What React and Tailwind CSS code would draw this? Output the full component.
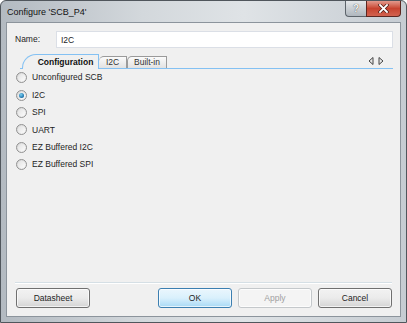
import React, { useState } from 'react';

const font = { fontFamily: '"Liberation Sans", Arial, sans-serif' };

// ── Radio option ─────────────────────────────────────────────
function Radio({ label, checked, onSelect }) {
  return (
    <button onClick={onSelect} className="flex items-center h-[17.4px] pl-[9px] text-left">
      <span className="w-[11px] h-[11px] rounded-full border border-[#929292] bg-gradient-to-br from-[#d4d4d4] to-[#f8f8f8] flex items-center justify-center shrink-0">
        <span className="w-[7px] h-[7px] rounded-full bg-gradient-to-br from-[#e2e2e2] to-[#fbfbfb] flex items-center justify-center">
          {checked && (
            <span className="w-[5px] h-[5px] rounded-full bg-[radial-gradient(circle_at_40%_35%,#7ed3f5,#1a6fa8_70%,#114a78)]" />
          )}
        </span>
      </span>
      <span className="ml-[5px] text-[8.5px] text-[#1e1e1e] leading-none">{label}</span>
    </button>
  );
}

// ── Push button ──────────────────────────────────────────────
function Btn({ children, variant = 'normal', className = '' }) {
  const styles = {
    normal: 'border-[#707070] bg-gradient-to-b from-[#f2f2f2] via-[#ebebeb] to-[#d4d4d4] text-[#1e1e1e]',
    primary: 'border-[#3c7fb1] bg-gradient-to-b from-[#eaf6fd] via-[#d9f0fc] to-[#a7d9f5] text-[#1e1e1e]',
    disabled: 'border-[#c4c8cb] bg-[#f4f4f4] text-[#a0a0a0]',
  };
  return (
    <button className={`h-[20px] w-[74px] rounded-[3px] border text-[8.5px] shadow-[inset_0_0_0_1px_rgba(255,255,255,0.7)] ${styles[variant]} ${className}`}>
      {children}
    </button>
  );
}

export default function App() {
  const options = ['Unconfigured SCB', 'I2C', 'SPI', 'UART', 'EZ Buffered I2C', 'EZ Buffered SPI'];
  const [selected, setSelected] = useState('I2C');
  const [name, setName] = useState('I2C');
  const [tab, setTab] = useState('Configuration');

  const tabCls = (t, base) =>
    `${base} border border-b-0 text-[8.5px] leading-none ${
      tab === t
        ? 'border-[#84c1f3] bg-[#f0f0f0] font-bold text-[#111] h-[15px] -mb-[1px]'
        : 'border-[#9a9a9a] bg-gradient-to-b from-[#fbfbfb] to-[#e2e2e2] text-[#333] h-[12px]'
    }`;

  return (
    <div style={font} className="w-[407px] h-[323px] flex flex-col border border-[#50565c] rounded-t-[6px] px-[5px] pb-[5px] bg-[linear-gradient(90deg,#b3bac1_0%,#d3d8dc_35%,#dfe3e6_60%,#c6ccd2_100%)]">
      {/* ── Title bar ── */}
      <div className="h-[21px] shrink-0 flex items-start">
        <span className="ml-[1px] mt-[5px] text-[9px] text-[#111]">Configure 'SCB_P4'</span>
        <div className="ml-auto flex">
          <button className="w-[21px] h-[16px] rounded-bl-[4px] border border-t-0 border-r-0 border-[#5d646b] bg-gradient-to-b from-[#e4e7ea] via-[#c9ced3] to-[#b0b7be] text-[10px] font-bold text-[#f4f4f4] leading-none [text-shadow:0_0_1px_#222]">
            ?
          </button>
          <button className="w-[35px] h-[16px] rounded-br-[4px] border border-t-0 border-[#5d2620] bg-gradient-to-b from-[#e2998d] via-[#c7432f] to-[#d2624f] flex items-center justify-center">
            <svg width="11" height="9" viewBox="0 0 11 9">
              <path d="M2 1 L9 8 M9 1 L2 8" stroke="#4a1a14" strokeWidth="3.2" strokeLinecap="square" />
              <path d="M2 1 L9 8 M9 1 L2 8" stroke="#fff" strokeWidth="1.8" strokeLinecap="square" />
            </svg>
          </button>
        </div>
      </div>

      {/* ── Client area ── */}
      <div className="flex-1 flex flex-col border border-[#8c949c] bg-[#f0f0f0]">
        {/* Name */}
        <div className="flex items-center mt-[8px] pl-[8px] pr-[7px]">
          <span className="w-[41px] text-[8.5px] text-[#1e1e1e]">Name:</span>
          <input
            value={name}
            onChange={(e) => setName(e.target.value)}
            className="flex-1 h-[17px] border border-[#dbdfe6] bg-white px-[4px] text-[8.5px] text-[#1e1e1e] outline-none"
          />
        </div>

        {/* Tabs */}
        <div className="flex items-end mt-[7px] ml-[13px] mr-[7px] h-[14px] border-b border-[#84c1f3]">
          <button onClick={() => setTab('Configuration')} className={tabCls('Configuration', 'w-[77px] ml-[2px] pl-[10px] rounded-tl-[14px]')}>
            Configuration
          </button>
          <button onClick={() => setTab('I2C')} className={tabCls('I2C', 'w-[28px] rounded-tl-[5px] border-l-0')}>
            I2C
          </button>
          <button onClick={() => setTab('Built-in')} className={tabCls('Built-in', 'w-[40px] rounded-tl-[5px]')}>
            Built-in
          </button>
          <div className="ml-auto mb-[3px] mr-[9px] flex gap-[4px]">
            <svg width="6" height="8" viewBox="0 0 6 8">
              <path d="M5 0.5 L1 4 L5 7.5 Z" fill="#e8e8e8" stroke="#444" strokeWidth="1" />
            </svg>
            <svg width="6" height="8" viewBox="0 0 6 8">
              <path d="M1 0.5 L5 4 L1 7.5 Z" fill="#e8e8e8" stroke="#444" strokeWidth="1" />
            </svg>
          </div>
        </div>

        {/* Options */}
        <div className="flex flex-col items-start">
          {options.map((o) => (
            <Radio key={o} label={o} checked={selected === o} onSelect={() => setSelected(o)} />
          ))}
        </div>

        <div className="flex-1" />

        {/* Separator */}
        <div className="mx-[8px] border-t border-[#d5dfe5] border-b-white border-b" />

        {/* Buttons */}
        <div className="flex items-center mt-[4px] mb-[8px] pl-[9px] pr-[8px]">
          <Btn>Datasheet</Btn>
          <div className="flex-1" />
          <div className="flex gap-[6px]">
            <Btn variant="primary">OK</Btn>
            <Btn variant="disabled">Apply</Btn>
            <Btn>Cancel</Btn>
          </div>
        </div>
      </div>
    </div>
  );
}
